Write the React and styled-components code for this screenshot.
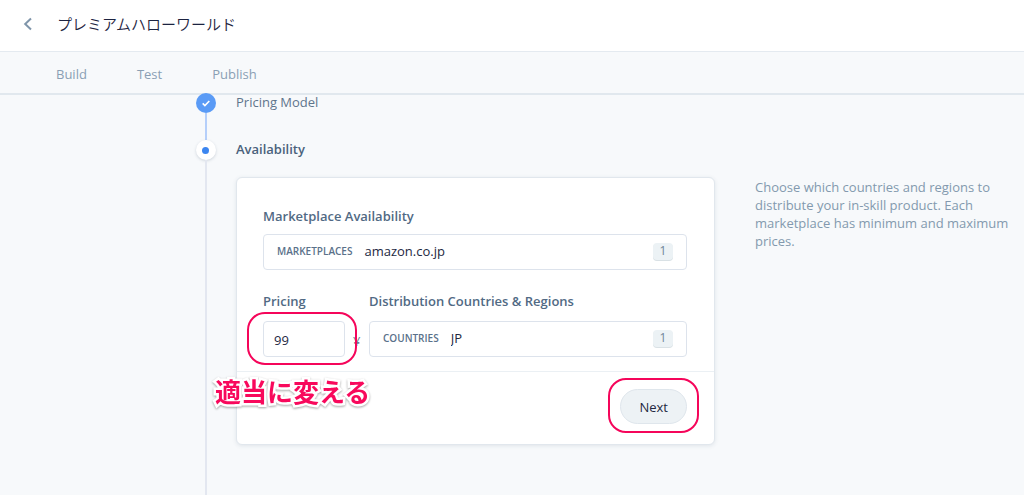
import React, { useState } from "react";
import styled, { createGlobalStyle, css } from "styled-components";

const GlobalStyle = createGlobalStyle`
    * {
        box-sizing: border-box;
    }

    body {
        margin: 0;
        background-color: #f7f9fb;
        color: #4d6580;
        font-family: "Open Sans", "Noto Sans CJK JP", sans-serif;
        font-size: 13px;
        line-height: 20px;
    }

    button, input, select {
        font: inherit;
    }
`

const Page = styled.div`
    display: flex;
    flex-direction: column;
    min-height: 100vh;
`

const Header = styled.header`
    display: flex;
    align-items: center;
    gap: 24px;
    height: 52px;
    padding: 0 24px 4px 23px;
    background-color: #fff;
    border-bottom: 1px solid #e4eaf0;
`

const BackButton = styled.button`
    display: flex;
    padding: 0;
    border: none;
    background: none;
    color: #7f95aa;
    cursor: pointer;
`

const Title = styled.h1`
    margin: 0;
    color: #1c2340;
    font-family: "Noto Sans CJK JP", sans-serif;
    font-size: 15px;
    font-weight: 350;
`

const Nav = styled.nav`
    display: flex;
    align-items: center;
    gap: 50px;
    height: 43px;
    padding: 2px 56px 0;
    border-bottom: 2px solid #e1e8ee;
`

const NavLink = styled.a`
    color: #8a9fb4;
    text-decoration: none;
`

const Main = styled.main`
    display: flex;
    flex: 1;
    gap: 40px;
    padding: 0 12px 0 195px;
`

const Steps = styled.ol`
    display: flex;
    flex-direction: column;
    flex: 0 1 520px;
    margin: -2px 0 0;
    padding: 0;
    list-style: none;
`

const Step = styled.li`
    display: flex;
    gap: 20px;
    flex: ${(props) => (props.$last ? 1 : "none")};
    min-height: 47px;
`

const Rail = styled.div`
    display: flex;
    flex-direction: column;
    align-items: center;
    flex: none;
    width: 21px;

    &::after {
        content: "";
        flex: 1;
        width: 2px;
        background-color: ${(props) => (props.$done ? "#b5cffa" : "#e3e7f0")};
    }
`

const Marker = styled.span`
    display: flex;
    align-items: center;
    justify-content: center;
    width: 20px;
    height: 20px;
    border-radius: 50%;
    color: #fff;
    background-color: #5a9bf6;

    ${(props) => props.$current && css`
        background-color: #fff;
        box-shadow: 0 1px 3px rgb(60 80 110 / 22%);

        &::after {
            content: "";
            width: 7px;
            height: 7px;
            border-radius: 50%;
            background-color: #3c86f0;
        }
    `}
`

const StepBody = styled.div`
    flex: 1;
    min-width: 0;
`

const StepName = styled.h2`
    margin: 0;
    color: ${(props) => (props.$current ? "#4a627c" : "#5f758c")};
    font-size: 13px;
    font-weight: ${(props) => (props.$current ? 600 : 400)};
    line-height: 18px;
`

const Card = styled.form`
    margin-top: 19px;
    background-color: #fff;
    border: 1px solid #e1e7ed;
    border-radius: 6px;
    box-shadow: 0 1px 4px rgb(60 80 110 / 12%);
`

const Fields = styled.div`
    display: flex;
    flex-direction: column;
    gap: 21px;
    padding: 28px 27px 14px 26px;
`

const FieldRow = styled.div`
    display: flex;
    gap: 8px;
`

const Field = styled.div`
    display: flex;
    flex-direction: column;
    gap: 8px;
    flex: ${(props) => (props.$narrow ? "0 0 98px" : 1)};

    ${FieldRow} & {
        gap: 10px;
    }
`

const FieldLabel = styled.label`
    color: #516a84;
    font-size: 13px;
    font-weight: 600;
    white-space: nowrap;
`

const box = css`
    height: 36px;
    border: 1px solid #dde3ec;
    border-radius: 4px;
    background-color: #fff;
`

const Picker = styled.div`
    ${box}
    display: flex;
    align-items: center;
    gap: 12px;
    padding: 0 13px 2px;
`

const PickerTag = styled.span`
    color: #5a718a;
    font-size: 10px;
    font-weight: 600;
`

const PickerSelect = styled.select`
    flex: 1;
    min-width: 0;
    padding: 0;
    appearance: none;
    border: none;
    background: none;
    color: #23283f;
`

const Count = styled.span`
    width: 20px;
    height: 17px;
    border-radius: 4px;
    background-color: #ecf2f5;
    box-shadow: 0 1px 0 #d9e1e5;
    color: #6f8499;
    font-size: 12px;
    line-height: 16px;
    text-align: center;
`

const PriceRow = styled.div`
    display: flex;
    align-items: center;
    gap: 8px;
`

const PriceInput = styled.input`
    ${box}
    width: 82px;
    padding: 2px 10px 0;
    color: #23283f;
`

const Currency = styled.span`
    padding-top: 3px;
    color: #6f7f92;
    font-size: 13px;
`

const CardFooter = styled.div`
    display: flex;
    justify-content: flex-end;
    padding: 17px 27px 20px;
    border-top: 1px solid #ebf0f4;
`

const NextButton = styled.button`
    height: 35px;
    padding: 0 18px;
    border: 1px solid #dfe6ec;
    border-radius: 18px;
    background-color: #edf2f5;
    color: #23283f;
    cursor: pointer;
`

const Marked = styled.div`
    position: relative;
    display: flex;
`

const Ring = styled.span`
    position: absolute;
    inset: ${(props) => props.$inset};
    border: 2px solid #f5055a;
    border-radius: 18px;
    pointer-events: none;
`

const Note = styled.span`
    position: absolute;
    top: 50px;
    left: -48px;
    z-index: 1;
    color: #f8095c;
    font-family: "Noto Sans CJK JP", sans-serif;
    font-size: 26px;
    font-weight: 700;
    line-height: 40px;
    white-space: nowrap;
    -webkit-text-stroke: 5px #fff;
    paint-order: stroke fill;
    filter: drop-shadow(0 1px 1px rgb(0 0 0 / 35%));
    pointer-events: none;
`

const Help = styled.p`
    flex: 1;
    margin: 83px 0 0;
    color: #8399ae;
    line-height: 18px;
`

const links = ["Build", "Test", "Publish"];

const CountPicker = ({ id, tag, value }) => (
    <Picker>
        <PickerTag>{tag}</PickerTag>
        <PickerSelect id={id} defaultValue={value}>
            <option>{value}</option>
        </PickerSelect>
        <Count>1</Count>
    </Picker>
)

const App = () => {
    const [price, setPrice] = useState("99");

    return (<Page>
        <GlobalStyle/>
        <Header>
            <BackButton type="button" aria-label="Back">
                <svg width="10" height="14" viewBox="0 0 10 14" fill="none" stroke="currentColor" strokeWidth="2">
                    <path d="M8 1.5 2.2 7 8 12.5"/>
                </svg>
            </BackButton>
            <Title>プレミアムハローワールド</Title>
        </Header>

        <Nav>
            {links.map((link) => <NavLink key={link} href={"#" + link.toLowerCase()}>{link}</NavLink>)}
        </Nav>

        <Main>
            <Steps>
                <Step>
                    <Rail $done>
                        <Marker>
                            <svg width="8" height="7" viewBox="0 0 8 7" fill="none" stroke="currentColor" strokeWidth="1.6">
                                <path d="M.7 3.4 2.9 5.6 7.3 1"/>
                            </svg>
                        </Marker>
                    </Rail>
                    <StepBody>
                        <StepName>Pricing Model</StepName>
                    </StepBody>
                </Step>

                <Step $last>
                    <Rail>
                        <Marker $current/>
                    </Rail>
                    <StepBody>
                        <StepName $current>Availability</StepName>
                        <Card onSubmit={(event) => event.preventDefault()}>
                            <Fields>
                                <Field>
                                    <FieldLabel htmlFor="marketplaces">Marketplace Availability</FieldLabel>
                                    <CountPicker id="marketplaces" tag="MARKETPLACES" value="amazon.co.jp"/>
                                </Field>
                                <FieldRow>
                                    <Field $narrow>
                                        <FieldLabel htmlFor="price">Pricing</FieldLabel>
                                        <PriceRow>
                                            <Marked>
                                                <PriceInput id="price" value={price} onChange={(event) => setPrice(event.target.value)}/>
                                                <Ring $inset="-9px -12px -8px -16px"/>
                                                <Note>適当に変える</Note>
                                            </Marked>
                                            <Currency>¥</Currency>
                                        </PriceRow>
                                    </Field>
                                    <Field>
                                        <FieldLabel htmlFor="countries">Distribution Countries &amp; Regions</FieldLabel>
                                        <CountPicker id="countries" tag="COUNTRIES" value="JP"/>
                                    </Field>
                                </FieldRow>
                            </Fields>
                            <CardFooter>
                                <Marked>
                                    <NextButton type="submit">Next</NextButton>
                                    <Ring $inset="-11px -12px -9px -12px"/>
                                </Marked>
                            </CardFooter>
                        </Card>
                    </StepBody>
                </Step>
            </Steps>

            <Help>
                Choose which countries and regions to distribute your in-skill product. Each marketplace has minimum and maximum prices.
            </Help>
        </Main>
    </Page>)
}

export default App;
